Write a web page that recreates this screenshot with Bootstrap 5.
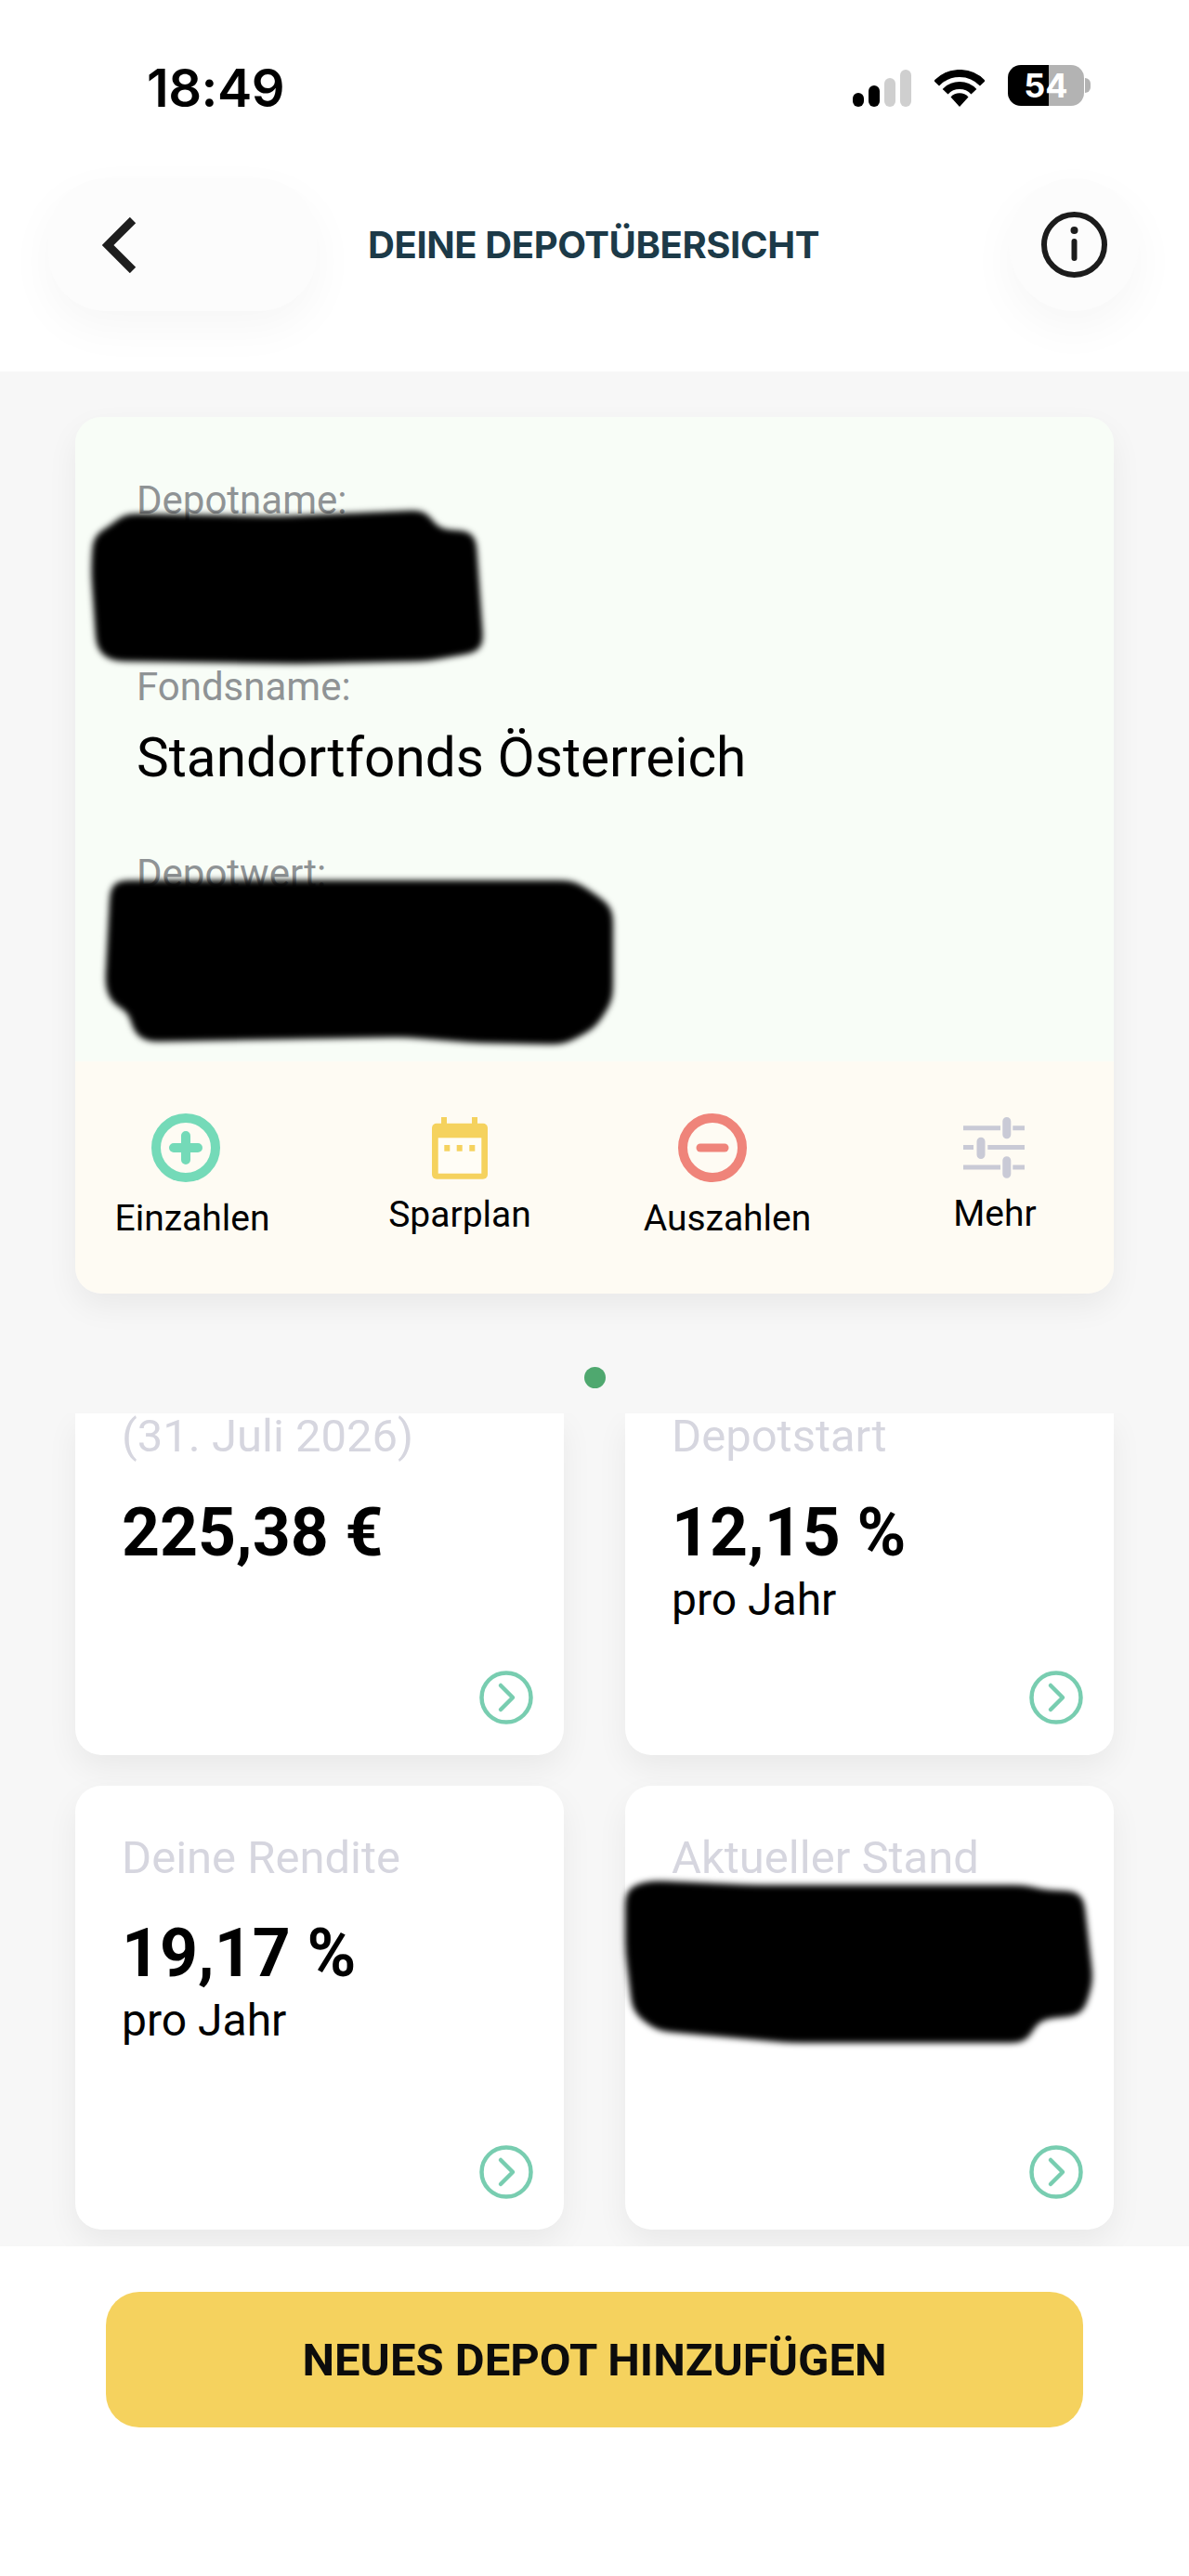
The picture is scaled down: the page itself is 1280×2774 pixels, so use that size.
<!DOCTYPE html>
<html lang="de">
<head>
<meta charset="utf-8">
<title>Deine Depotübersicht</title>
<link href="https://cdn.jsdelivr.net/npm/bootstrap@5.3.0/dist/css/bootstrap.min.css" rel="stylesheet">
<style>
body{background:#fff;font-family:Roboto,"Liberation Sans",sans-serif;color:#000;}
.phone{width:1280px;height:2774px;overflow:hidden;}
.top-area{height:400px;background:#fff;}
.status-row{height:192px;padding:70px 106px 0 158px;}
.clock{font-family:Inter,"Liberation Sans",sans-serif;font-weight:600;font-size:56px;line-height:50px;letter-spacing:-.5px;}
.bars{gap:5px;height:40px;margin-top:5px;margin-right:25px;}
.bar{width:12px;border-radius:6px;background:#000;}
.bar-off{background:#cfcfcf;}
.bar-1{height:15px}.bar-2{height:23px}.bar-3{height:31px}.bar-4{height:40px}
.wifi-ico{margin-top:5px;margin-right:25px;}
.batt{width:82px;height:44px;border-radius:14px;background:linear-gradient(90deg,#000 54%,#b3b3b3 54%);color:#fff;font-family:Inter,"Liberation Sans",sans-serif;font-weight:700;font-size:36px;line-height:44px;text-align:center;}
.batt-nub{width:6px;height:16px;margin:14px 0 0 1px;background:#b3b3b3;border-radius:0 8px 8px 0;}
.nav-row{padding:0 54px 0 52px;}
.btn-back{width:289px;height:143px;border-radius:62px;background:#fcfcfc;box-shadow:0 18px 50px rgba(0,0,0,.04);border:0;padding:0 0 0 58px;}
.btn-info{width:140px;height:143px;border-radius:50%;background:#fcfcfc;box-shadow:0 18px 50px rgba(0,0,0,.04);border:0;padding:0;}
.page-title{font-family:Inter,"Liberation Sans",sans-serif;font-weight:700;font-size:40px;line-height:48px;color:#1c3a48;margin:0 0 0 55px;letter-spacing:-.4px;}
.mid-area{background:#f7f7f7;height:2019px;}
.depot-wrap{padding:49px 81px 0 81px;}
.depot-card{position:relative;border:0;border-radius:28px;box-shadow:0 14px 34px rgba(0,0,0,.06);background:transparent;}
.depot-info{height:694px;background:#f8fdf7;border-radius:28px 28px 0 0;padding:67px 66px 0;}
.fld-label{font-size:42px;line-height:46px;color:#8f9395;}
.fld-gap-a{height:155px;}
.fld-value{font-size:58.5px;line-height:68px;margin-top:19px;margin-bottom:68px;}
.depot-acts{height:250px;background:#fefbf3;border-radius:0 0 28px 28px;padding-top:56px;}
.acts-row{margin:0 -31px 0 -18px;}
.act{width:288px;font-size:39px;line-height:44px;color:#000;}
.act-txt{margin-top:17px;}
.act-txt-hi{margin-top:16px;}
.ico-plus{margin-right:15px;}
.ico-cal{margin-top:4px;}
.ico-minus{margin-right:33px;}
.ico-sl{margin-top:4px;margin-right:2px;}
.redact{position:absolute;left:0;top:0;overflow:visible;pointer-events:none;}
.pager{height:129px;padding-top:79px;}
.pager-dot{width:23px;height:23px;border-radius:50%;background:#4fa86f;}
.tiles{padding:0 81px;height:897px;}
.tiles .row{--bs-gutter-x:66px;--bs-gutter-y:33px;}
.tile{position:relative;height:478px;background:#fff;border-radius:28px;box-shadow:0 14px 34px rgba(0,0,0,.06);padding:50px 33px 33px 50px;}
.tile-scrolled{height:368px;padding-top:0;border-radius:0 0 28px 28px;clip-path:inset(0 -60px -60px -60px);}
.tile-label{font-size:49px;line-height:56px;color:#d6d6df;}
.tile-value{font-size:71.5px;line-height:84px;font-weight:700;margin-top:33px;}
.tile-sub{font-size:48px;line-height:56px;margin-top:2px;}
.tile-scrolled .tile-label{line-height:50px;}
.tile-scrolled .tile-value{margin-top:37px;}
.tile-go{margin-top:auto;align-self:flex-end;display:block;}
.bottom-area{position:relative;z-index:1;height:355px;background:#fff;padding:49px 114px 0;}
.btn-add{width:100%;height:146px;border:0;border-radius:36px;background:#f5d25e;color:#0c0c0c;font-weight:700;font-size:49px;line-height:56px;padding:2px 0 0;}
</style>
</head>
<body>
<div class="phone d-flex flex-column">
  <header class="top-area">
    <div class="status-row d-flex justify-content-between align-items-start">
      <div class="clock">18:49</div>
      <div class="d-flex align-items-start">
        <div class="bars d-flex align-items-end">
          <span class="bar bar-1"></span><span class="bar bar-2"></span><span class="bar bar-off bar-3"></span><span class="bar bar-off bar-4"></span>
        </div>
        <svg class="wifi-ico" width="54" height="40" viewBox="0 0 54 40" fill="none">
          <path d="M2.1 14.8A34 34 0 0 1 51.9 14.8" stroke="#000" stroke-width="8"/>
          <path d="M11.6 23.7A21 21 0 0 1 42.4 23.7" stroke="#000" stroke-width="8"/>
          <path d="M27 40L17.5 29.5A13 13 0 0 1 36.5 29.5Z" fill="#000"/>
        </svg>
        <div class="batt">54</div>
        <div class="batt-nub"></div>
      </div>
    </div>
    <div class="nav-row d-flex align-items-center">
      <button class="btn btn-back d-flex align-items-center" type="button" aria-label="Zurück">
        <svg width="38" height="60" viewBox="0 0 38 60" fill="none"><path d="M33 3L6 30L33 57" stroke="#1e1e1e" stroke-width="9"/></svg>
      </button>
      <h1 class="page-title">DEINE DEPOTÜBERSICHT</h1>
      <button class="btn btn-info ms-auto d-flex align-items-center justify-content-center" type="button" aria-label="Info">
        <svg width="71" height="71" viewBox="0 0 71 71" fill="none">
          <circle cx="35.5" cy="35.5" r="32.5" stroke="#1c1c1c" stroke-width="6"/>
          <circle cx="35.5" cy="20" r="4" fill="#1c1c1c"/>
          <path d="M35.5 32V50" stroke="#1c1c1c" stroke-width="6" stroke-linecap="round"/>
        </svg>
      </button>
    </div>
  </header>

  <main class="mid-area">
    <div class="depot-wrap">
      <div class="card depot-card">
        <div class="depot-info">
          <div class="fld-label">Depotname:</div>
          <div class="fld-gap-a"></div>
          <div class="fld-label">Fondsname:</div>
          <div class="fld-value">Standortfonds Österreich</div>
          <div class="fld-label">Depotwert:</div>
        </div>
        <div class="depot-acts">
          <div class="acts-row d-flex">
            <div class="act d-flex flex-column align-items-center">
              <svg class="ico-plus" width="74" height="74" viewBox="0 0 74 74" fill="none">
                <circle cx="37" cy="37" r="32" stroke="#74dab8" stroke-width="10"/>
                <path d="M24 37H50M37 24V50" stroke="#74dab8" stroke-width="10" stroke-linecap="round"/>
              </svg>
              <div class="act-txt">Einzahlen</div>
            </div>
            <div class="act d-flex flex-column align-items-center">
              <svg class="ico-cal" width="60" height="67" viewBox="0 0 60 67">
                <rect x="10" y="0" width="6" height="10" fill="#f5d25e"/>
                <rect x="43" y="0" width="6" height="10" fill="#f5d25e"/>
                <rect x="0" y="6.7" width="60" height="60" rx="5" fill="#f5d25e"/>
                <rect x="6.7" y="22.3" width="46.6" height="38.4" fill="#fffdf6"/>
                <rect x="13.3" y="30" width="6" height="6.7" fill="#f5d25e"/>
                <rect x="26.7" y="30" width="6" height="6.7" fill="#f5d25e"/>
                <rect x="40.3" y="30" width="6" height="6.7" fill="#f5d25e"/>
              </svg>
              <div class="act-txt-hi">Sparplan</div>
            </div>
            <div class="act d-flex flex-column align-items-center">
              <svg class="ico-minus" width="74" height="74" viewBox="0 0 74 74" fill="none">
                <circle cx="37" cy="37" r="32" stroke="#ef847a" stroke-width="10"/>
                <path d="M24 37H50" stroke="#ef847a" stroke-width="9" stroke-linecap="round"/>
              </svg>
              <div class="act-txt">Auszahlen</div>
            </div>
            <div class="act d-flex flex-column align-items-center">
              <svg class="ico-sl" width="66" height="66" viewBox="0 0 66 66" fill="none">
                <g stroke="#c9cad6" stroke-width="5">
                  <path d="M0 11.7H40M53.3 11.7H66M0 32.5H11M26.3 32.5H66M0 54H40M53.3 54H66"/>
                </g>
                <g stroke="#c9cad6" stroke-width="9" stroke-linecap="round">
                  <path d="M46.8 4.5V18.8M19 26.2V40.5M46.8 46.8V61.2"/>
                </g>
              </svg>
              <div class="act-txt-hi">Mehr</div>
            </div>
          </div>
        </div>
        <svg class="redact" width="1117" height="944" viewBox="81 449 1117 944" aria-hidden="true">
          <defs><filter id="smear" x="-15%" y="-20%" width="130%" height="140%">
            <feGaussianBlur stdDeviation="9"/>
            <feComponentTransfer><feFuncA type="linear" slope="7" intercept="-3"/></feComponentTransfer>
            <feGaussianBlur stdDeviation="3"/>
          </filter></defs>
          <path filter="url(#smear)" d="M123 564L131 553L300 556L460 549L470 570L512 572L521 701L460 712L321 715L119 712L104 701L98 616L100 576Z"/>
          <path filter="url(#smear)" d="M119 948L618 948L641 963L660 977L660 1077L641 1107L607 1125L511 1123L434 1117L155 1122L142 1110L140 1088L121 1083L113 1063Z"/>
        </svg>
      </div>
    </div>
    <div class="pager d-flex justify-content-center"><span class="pager-dot"></span></div>
    <div class="tiles">
      <div class="row row-cols-2">
        <div class="col">
          <div class="tile tile-scrolled d-flex flex-column">
            <div class="tile-label">(31. Juli 2026)</div>
            <div class="tile-value">225,38 €</div>
            <svg class="tile-go" width="58" height="58" viewBox="0 0 58 58" fill="none"><circle cx="29" cy="29" r="26.5" stroke="#78cdb0" stroke-width="4.5"/><path d="M23 16L36 29L23 42" stroke="#78cdb0" stroke-width="4.5" stroke-linecap="round" stroke-linejoin="round"/></svg>
          </div>
        </div>
        <div class="col">
          <div class="tile tile-scrolled d-flex flex-column">
            <div class="tile-label">Depotstart</div>
            <div class="tile-value">12,15 %</div>
            <div class="tile-sub">pro Jahr</div>
            <svg class="tile-go" width="58" height="58" viewBox="0 0 58 58" fill="none"><circle cx="29" cy="29" r="26.5" stroke="#78cdb0" stroke-width="4.5"/><path d="M23 16L36 29L23 42" stroke="#78cdb0" stroke-width="4.5" stroke-linecap="round" stroke-linejoin="round"/></svg>
          </div>
        </div>
        <div class="col">
          <div class="tile d-flex flex-column">
            <div class="tile-label">Deine Rendite</div>
            <div class="tile-value">19,17 %</div>
            <div class="tile-sub">pro Jahr</div>
            <svg class="tile-go" width="58" height="58" viewBox="0 0 58 58" fill="none"><circle cx="29" cy="29" r="26.5" stroke="#78cdb0" stroke-width="4.5"/><path d="M23 16L36 29L23 42" stroke="#78cdb0" stroke-width="4.5" stroke-linecap="round" stroke-linejoin="round"/></svg>
          </div>
        </div>
        <div class="col">
          <div class="tile d-flex flex-column">
            <div class="tile-label">Aktueller Stand</div>
            <svg class="redact" width="526" height="478" viewBox="673 1923 526 478" aria-hidden="true">
              <path filter="url(#smear)" d="M673 2033L700 2025L812 2030L1106 2030L1121 2035L1166 2037L1177 2133L1166 2170L1117 2175L1106 2200L850 2200L707 2187L681 2167L673 2100Z"/>
            </svg>
            <svg class="tile-go" width="58" height="58" viewBox="0 0 58 58" fill="none"><circle cx="29" cy="29" r="26.5" stroke="#78cdb0" stroke-width="4.5"/><path d="M23 16L36 29L23 42" stroke="#78cdb0" stroke-width="4.5" stroke-linecap="round" stroke-linejoin="round"/></svg>
          </div>
        </div>
      </div>
    </div>
  </main>

  <footer class="bottom-area">
    <button class="btn btn-add" type="button">NEUES DEPOT HINZUFÜGEN</button>
  </footer>
</div>
<script src="https://cdn.jsdelivr.net/npm/bootstrap@5.3.0/dist/js/bootstrap.bundle.min.js"></script>
</body>
</html>
